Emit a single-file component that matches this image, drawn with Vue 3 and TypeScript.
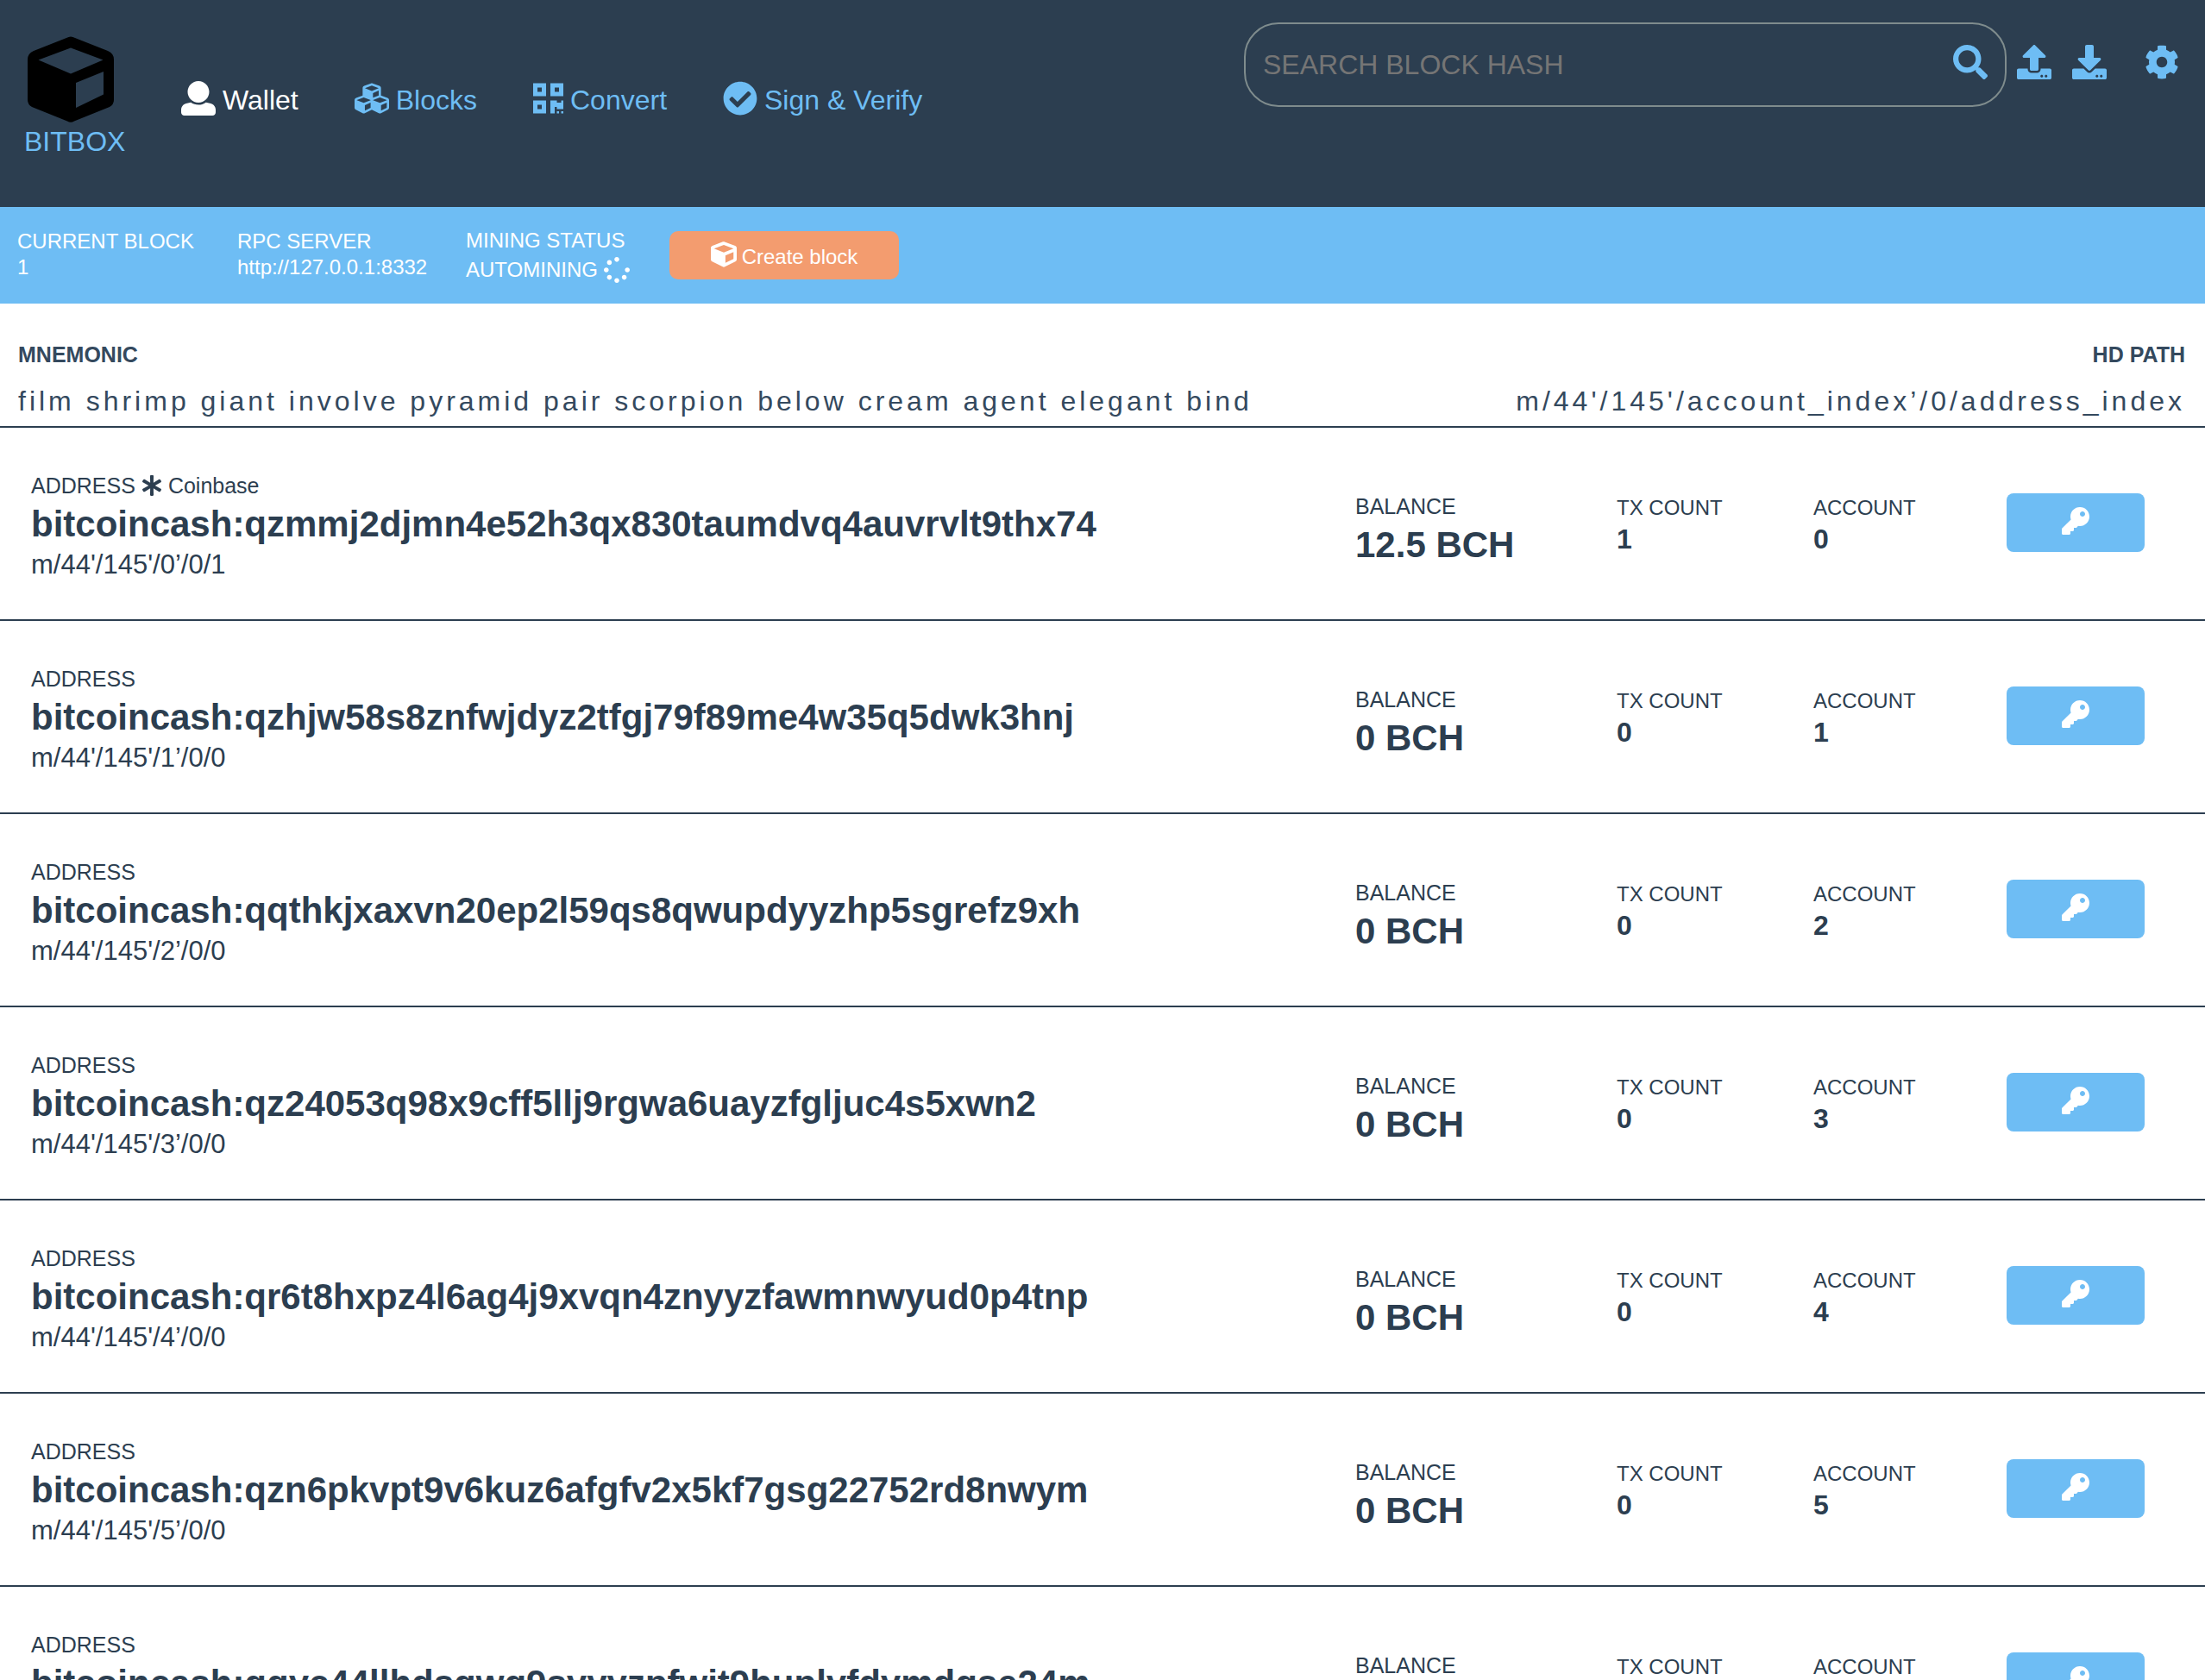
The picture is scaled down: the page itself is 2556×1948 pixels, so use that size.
<script setup lang="ts">
import { ref } from 'vue'

interface Glyph {
  box: string
  d: string
}

interface Account {
  address: string
  path: string
  balance: string
  txCount: number
  index: number
  coinbase?: boolean
}

const icons: Record<string, Glyph> = {
  user: {
    box: '0 0 512 512',
    d: 'M256 0c88.366 0 160 71.634 160 160s-71.634 160-160 160S96 248.366 96 160 167.634 0 256 0zm183.283 333.821l-71.313-17.828c-74.923 53.89-165.738 41.864-223.94 0l-71.313 17.828C29.981 344.505 0 382.903 0 426.955V464c0 26.51 21.49 48 48 48h416c26.51 0 48-21.49 48-48v-37.045c0-44.052-29.981-82.45-72.717-93.134z',
  },
  cubes: {
    box: '0 0 512 512',
    d: 'M488.6 250.2L392 214V105.5c0-15-9.3-28.4-23.4-33.7l-100-37.5c-8.1-3.1-17.1-3.1-25.3 0l-100 37.5c-14.1 5.3-23.4 18.7-23.4 33.7V214l-96.6 36.2C9.3 255.5 0 268.9 0 283.9V394c0 13.6 7.7 26.1 19.9 32.2l100 50c10.1 5.1 22.1 5.1 32.2 0l103.9-52 103.9 52c10.1 5.1 22.1 5.1 32.2 0l100-50c12.2-6.1 19.9-18.6 19.9-32.2V283.9c0-15-9.3-28.4-23.4-33.7zM358 214.8l-85 31.9v-68.2l85-37v73.3zM154 104.1l102-38.2 102 38.2v.6l-102 41.4-102-41.4v-.6zm84 291.1l-85 42.5v-79.1l85-38.8v75.4zm0-112l-102 41.4-102-41.4v-.6l102-38.2 102 38.2v.6zm240 112l-85 42.5v-79.1l85-38.8v75.4zm0-112l-102 41.4-102-41.4v-.6l102-38.2 102 38.2v.6z',
  },
  qrcode: {
    box: '0 0 448 512',
    d: 'M0 224h192V32H0v192zM64 96h64v64H64V96zm192-64v192h192V32H256zm128 128h-64V96h64v64zM0 480h192V288H0v192zm64-128h64v64H64v-64zm352-64h32v128h-96v-32h-32v96h-64V288h96v32h64v-32zm0 160h32v32h-32v-32zm-64 0h32v32h-32v-32z',
  },
  check: {
    box: '0 0 512 512',
    d: 'M504 256c0 136.967-111.033 248-248 248S8 392.967 8 256 119.033 8 256 8s248 111.033 248 248zM227.314 387.314l184-184c6.248-6.248 6.248-16.379 0-22.627l-22.627-22.627c-6.248-6.249-16.379-6.249-22.628 0L216 308.118l-70.059-70.059c-6.248-6.248-16.379-6.248-22.628 0l-22.627 22.627c-6.248 6.248-6.248 16.379 0 22.627l104 104c6.249 6.249 16.379 6.249 22.628.001z',
  },
  search: {
    box: '0 0 512 512',
    d: 'M505 442.7L405.3 343c-4.5-4.5-10.6-7-17-7H372c27.6-35.3 44-79.7 44-128C416 93.1 322.9 0 208 0S0 93.1 0 208s93.1 208 208 208c48.3 0 92.7-16.4 128-44v16.3c0 6.4 2.5 12.5 7 17l99.7 99.7c9.4 9.4 24.6 9.4 33.9 0l28.3-28.3c9.4-9.4 9.4-24.6.1-34zM208 336c-70.7 0-128-57.2-128-128 0-70.7 57.2-128 128-128 70.7 0 128 57.2 128 128 0 70.7-57.2 128-128 128z',
  },
  upload: {
    box: '0 0 512 512',
    d: 'M296 384h-80c-13.3 0-24-10.7-24-24V192h-87.7c-17.8 0-26.7-21.5-14.1-34.1L242.3 5.7c7.5-7.5 19.8-7.5 27.3 0l152.2 152.2c12.6 12.6 3.7 34.1-14.1 34.1H320v168c0 13.3-10.7 24-24 24zm216-8v112c0 13.3-10.7 24-24 24H24c-13.3 0-24-10.7-24-24V376c0-13.3 10.7-24 24-24h136v8c0 30.9 25.1 56 56 56h80c30.9 0 56-25.1 56-56v-8h136c13.3 0 24 10.7 24 24zm-124 88c0-11-9-20-20-20s-20 9-20 20 9 20 20 20 20-9 20-20zm64 0c0-11-9-20-20-20s-20 9-20 20 9 20 20 20 20-9 20-20z',
  },
  download: {
    box: '0 0 512 512',
    d: 'M216 0h80c13.3 0 24 10.7 24 24v168h87.7c17.8 0 26.7 21.5 14.1 34.1L269.7 378.3c-7.5 7.5-19.8 7.5-27.3 0L90.1 226.1c-12.6-12.6-3.7-34.1 14.1-34.1H192V24c0-13.3 10.7-24 24-24zm296 376v112c0 13.3-10.7 24-24 24H24c-13.3 0-24-10.7-24-24V376c0-13.3 10.7-24 24-24h146.7l49 49c20.1 20.1 52.5 20.1 72.6 0l49-49H488c13.3 0 24 10.7 24 24zm-124 88c0-11-9-20-20-20s-20 9-20 20 9 20 20 20 20-9 20-20zm64 0c0-11-9-20-20-20s-20 9-20 20 9 20 20 20 20-9 20-20z',
  },
  cog: {
    box: '0 0 512 512',
    d: 'M487.4 315.7l-42.6-24.6c4.3-23.2 4.3-47 0-70.2l42.6-24.6c4.9-2.8 7.1-8.6 5.5-14-11.1-35.6-30-67.8-54.7-94.6-3.8-4.1-10-5.1-14.8-2.3L380.8 110c-17.9-15.4-38.5-27.3-60.8-35.1V25.8c0-5.6-3.9-10.5-9.4-11.7-36.7-8.2-74.3-7.8-109.2 0-5.5 1.2-9.4 6.1-9.4 11.7V75c-22.2 7.9-42.8 19.8-60.8 35.1L88.7 85.5c-4.9-2.8-11-1.9-14.8 2.3-24.7 26.7-43.6 58.9-54.7 94.6-1.7 5.4.6 11.2 5.5 14L67.3 221c-4.3 23.2-4.3 47 0 70.2l-42.6 24.6c-4.9 2.8-7.1 8.6-5.5 14 11.1 35.6 30 67.8 54.7 94.6 3.8 4.1 10 5.1 14.8 2.3l42.6-24.6c17.9 15.4 38.5 27.3 60.8 35.1v49.2c0 5.6 3.9 10.5 9.4 11.7 36.7 8.2 74.3 7.8 109.2 0 5.5-1.2 9.4-6.1 9.4-11.7v-49.2c22.2-7.9 42.8-19.8 60.8-35.1l42.6 24.6c4.9 2.8 11 1.9 14.8-2.3 24.7-26.7 43.6-58.9 54.7-94.6 1.5-5.5-.7-11.3-5.6-14.1zM256 336c-44.1 0-80-35.9-80-80s35.9-80 80-80 80 35.9 80 80-35.9 80-80 80z',
  },
  spinner: {
    box: '0 0 512 512',
    d: 'M304 48c0 26.51-21.49 48-48 48s-48-21.49-48-48 21.49-48 48-48 48 21.49 48 48zm-48 368c-26.51 0-48 21.49-48 48s21.49 48 48 48 48-21.49 48-48-21.49-48-48-48zm208-208c-26.51 0-48 21.49-48 48s21.49 48 48 48 48-21.49 48-48-21.49-48-48-48zM96 256c0-26.51-21.49-48-48-48S0 229.49 0 256s21.49 48 48 48 48-21.49 48-48zm12.922 99.078c-26.51 0-48 21.49-48 48s21.49 48 48 48 48-21.49 48-48c0-26.509-21.491-48-48-48zm294.156 0c-26.51 0-48 21.49-48 48s21.49 48 48 48 48-21.49 48-48c0-26.509-21.49-48-48-48zM108.922 60.922c-26.51 0-48 21.49-48 48s21.49 48 48 48 48-21.49 48-48-21.491-48-48-48z',
  },
  cube: {
    box: '0 0 512 512',
    d: 'M239.1 6.3l-208 78c-18.7 7-31.1 25-31.1 45v225.1c0 18.2 10.3 34.8 26.5 42.9l208 104c13.5 6.8 29.4 6.8 42.9 0l208-104c16.3-8.1 26.5-24.8 26.5-42.9V129.3c0-20-12.4-37.9-31.1-44.9l-208-78C262 2.2 250 2.2 239.1 6.3zM256 68.4l192 72v1.1l-192 78-192-78v-1.1l192-72zm32 356V275.5l160-65v133.9l-160 80z',
  },
  asterisk: {
    box: '0 0 512 512',
    d: 'M478.21 334.093L336 256l142.21-78.093c11.795-6.477 15.961-21.384 9.232-33.037l-19.48-33.741c-6.728-11.653-21.72-15.499-33.227-8.523L296 186.718l3.475-162.204C299.763 11.061 288.937 0 275.48 0h-38.96c-13.456 0-24.283 11.061-23.994 24.514L216 186.718 77.265 102.607c-11.506-6.976-26.499-3.13-33.227 8.523l-19.48 33.741c-6.728 11.653-2.562 26.56 9.233 33.037L176 256 33.79 334.093c-11.795 6.477-15.961 21.384-9.232 33.037l19.48 33.741c6.728 11.653 21.721 15.499 33.227 8.523L216 325.282l-3.475 162.204C212.237 500.939 223.064 512 236.52 512h38.961c13.456 0 24.283-11.061 23.995-24.514L296 325.282l138.735 84.111c11.506 6.976 26.499 3.13 33.227-8.523l19.48-33.741c6.728-11.653 2.563-26.559-9.232-33.036z',
  },
  key: {
    box: '0 0 512 512',
    d: 'M512 176.001C512 273.203 433.202 352 336 352c-11.22 0-22.19-1.062-32.827-3.069l-24.012 27.014A23.999 23.999 0 0 1 261.223 384H224v40c0 13.255-10.745 24-24 24h-40v40c0 13.255-10.745 24-24 24H24c-13.255 0-24-10.745-24-24v-78.059c0-6.365 2.529-12.47 7.029-16.971l161.802-161.802C163.108 213.814 160 195.271 160 176 160 78.798 238.797.001 335.999 0 433.488-.001 512 78.511 512 176.001zM336 128c0 26.51 21.49 48 48 48s48-21.49 48-48-21.49-48-48-48-48 21.49-48 48z',
  },
}

const links = [
  { label: 'Wallet', icon: 'user', active: true },
  { label: 'Blocks', icon: 'cubes', active: false },
  { label: 'Convert', icon: 'qrcode', active: false },
  { label: 'Sign & Verify', icon: 'check', active: false },
]

const tools = [
  { label: 'Export', icon: 'upload' },
  { label: 'Import', icon: 'download' },
  { label: 'Settings', icon: 'cog' },
]

const accounts: Account[] = [
  { address: 'bitcoincash:qzmmj2djmn4e52h3qx830taumdvq4auvrvlt9thx74', path: "m/44'/145'/0’/0/1", balance: '12.5 BCH', txCount: 1, index: 0, coinbase: true },
  { address: 'bitcoincash:qzhjw58s8znfwjdyz2tfgj79f89me4w35q5dwk3hnj', path: "m/44'/145'/1’/0/0", balance: '0 BCH', txCount: 0, index: 1 },
  { address: 'bitcoincash:qqthkjxaxvn20ep2l59qs8qwupdyyzhp5sgrefz9xh', path: "m/44'/145'/2’/0/0", balance: '0 BCH', txCount: 0, index: 2 },
  { address: 'bitcoincash:qz24053q98x9cff5llj9rgwa6uayzfgljuc4s5xwn2', path: "m/44'/145'/3’/0/0", balance: '0 BCH', txCount: 0, index: 3 },
  { address: 'bitcoincash:qr6t8hxpz4l6ag4j9xvqn4znyyzfawmnwyud0p4tnp', path: "m/44'/145'/4’/0/0", balance: '0 BCH', txCount: 0, index: 4 },
  { address: 'bitcoincash:qzn6pkvpt9v6kuz6afgfv2x5kf7gsg22752rd8nwym', path: "m/44'/145'/5’/0/0", balance: '0 BCH', txCount: 0, index: 5 },
  { address: 'bitcoincash:qqyc44llhdsqwq9syyyzpfwjt9huplyfdymdqse24m', path: "m/44'/145'/6’/0/0", balance: '0 BCH', txCount: 0, index: 6 },
]

const mnemonic = 'film shrimp giant involve pyramid pair scorpion below cream agent elegant bind'
const hdPath = "m/44'/145'/account_index’/0/address_index"
const query = ref('')
</script>

<template>
  <div class="app">
    <header class="top">
      <a class="brand" href="#">
        <svg class="logo" viewBox="0 0 100 100" aria-hidden="true">
          <path fill-rule="evenodd" d="M45 2Q50 -1 55 2L93 17Q100 20 100 27V74Q100 79 95 82L54 98.500Q50 101 46 98.500L5 82Q0 79 0 74V27Q0 20 7 17ZM12.500 27.500L50 43.500L87.500 27.500L50 13.500ZM56 54V83L88 67.500V41Z" />
        </svg>
        <span>BITBOX</span>
      </a>
      <nav class="nav">
        <a v-for="l in links" :key="l.label" href="#" :class="{ active: l.active }">
          <svg class="i40" :viewBox="icons[l.icon].box" aria-hidden="true"><path :d="icons[l.icon].d" /></svg>
          <span>{{ l.label }}</span>
        </a>
      </nav>
      <form class="search" @submit.prevent>
        <input v-model="query" type="text" placeholder="SEARCH BLOCK HASH" aria-label="Search block hash" />
        <button type="submit" aria-label="Search">
          <svg class="i40" :viewBox="icons.search.box" aria-hidden="true"><path :d="icons.search.d" /></svg>
        </button>
      </form>
      <div class="tools">
        <a v-for="t in tools" :key="t.label" href="#" :aria-label="t.label" :class="t.icon">
          <svg class="i40" :viewBox="icons[t.icon].box" aria-hidden="true"><path :d="icons[t.icon].d" /></svg>
        </a>
      </div>
    </header>

    <section class="status">
      <div class="stat">
        <span>CURRENT BLOCK</span>
        <span>1</span>
      </div>
      <div class="stat server">
        <span>RPC SERVER</span>
        <span>http://127.0.0.1:8332</span>
      </div>
      <div class="stat mining">
        <span>MINING STATUS</span>
        <span class="auto">AUTOMINING
          <svg class="i30" :viewBox="icons.spinner.box" aria-hidden="true"><path :d="icons.spinner.d" /></svg>
        </span>
      </div>
      <button class="create" type="button">
        <svg class="i30" :viewBox="icons.cube.box" aria-hidden="true"><path :d="icons.cube.d" /></svg>
        <span>Create block</span>
      </button>
    </section>

    <section class="seed">
      <div>
        <h2>MNEMONIC</h2>
        <p>{{ mnemonic }}</p>
      </div>
      <div class="right">
        <h2>HD PATH</h2>
        <p>{{ hdPath }}</p>
      </div>
    </section>

    <table class="accounts">
      <colgroup>
        <col />
        <col class="c-balance" />
        <col class="c-count" />
        <col class="c-index" />
        <col class="c-key" />
      </colgroup>
      <tbody>
        <tr v-for="a in accounts" :key="a.index">
          <td class="address">
            <div class="label">
              <span>ADDRESS</span>
              <template v-if="a.coinbase">
                <svg class="i24" :viewBox="icons.asterisk.box" aria-hidden="true"><path :d="icons.asterisk.d" /></svg>
                <span>Coinbase</span>
              </template>
            </div>
            <div class="big">{{ a.address }}</div>
            <div class="path">{{ a.path }}</div>
          </td>
          <td class="balance">
            <div class="label">BALANCE</div>
            <div class="big">{{ a.balance }}</div>
          </td>
          <td class="number">
            <div class="label">TX COUNT</div>
            <div class="value">{{ a.txCount }}</div>
          </td>
          <td class="number">
            <div class="label">ACCOUNT</div>
            <div class="value">{{ a.index }}</div>
          </td>
          <td class="action">
            <button type="button" :aria-label="`Show key of account ${a.index}`">
              <svg class="i32" :viewBox="icons.key.box" aria-hidden="true"><path :d="icons.key.d" /></svg>
            </button>
          </td>
        </tr>
      </tbody>
    </table>
  </div>
</template>

<style>
body {
  margin: 0;
  background: #fff;
}
html {
  scrollbar-width: none;
}
</style>

<style scoped>
.app {
  font-family: "Liberation Sans", Arial, Helvetica, sans-serif;
  font-size: 32px;
  color: #2c3e50;
}
svg {
  display: block;
  flex: none;
  fill: currentColor;
}
a {
  color: inherit;
  text-decoration: none;
}
button {
  border: 0;
  color: #fff;
  font: inherit;
  cursor: pointer;
}
.i24 { height: 24px; }
.i30 { height: 30px; }
.i32 { height: 32px; }
.i40 { height: 40px; }

.top {
  display: flex;
  align-items: flex-start;
  box-sizing: border-box;
  min-height: 240px;
  padding: 26px 30px 20px 28px;
  background: #2c3e50;
  color: #6ebdf4;
}
.brand {
  display: flex;
  flex-direction: column;
  width: 118px;
  padding-top: 16px;
  line-height: 44px;
}
.logo {
  width: 100px;
  height: 100px;
  margin-left: 4px;
  fill: #000;
}
.nav {
  display: flex;
  gap: 65px;
  margin-left: 64px;
  padding-top: 68px;
}
.nav a {
  display: flex;
  gap: 8px;
  line-height: 45px;
  white-space: nowrap;
}
.nav a.active {
  color: #fff;
}
.search {
  position: relative;
  flex: 0 1 884px;
  margin-left: auto;
}
.search input {
  box-sizing: border-box;
  width: 100%;
  height: 98px;
  padding: 0 80px 0 20px;
  border: 2px solid #7f8c8d;
  border-radius: 40px;
  background: transparent;
  color: #fff;
  font: inherit;
  outline: none;
}
.search input::placeholder {
  color: #757575;
  opacity: 1;
}
.search button {
  position: absolute;
  top: 26px;
  right: 22px;
  padding: 0;
  background: none;
  color: #6ebdf4;
}
.tools {
  display: flex;
  gap: 24px;
  padding: 26px 0 0 12px;
}
.tools .cog {
  margin-left: 20px;
}

.status {
  display: flex;
  align-items: flex-start;
  box-sizing: border-box;
  min-height: 112px;
  padding: 22px 0 0 20px;
  background: #6ebdf4;
  color: #fff;
  font-size: 24px;
  line-height: 30px;
}
.stat {
  display: flex;
  flex-direction: column;
  width: 255px;
  padding-top: 3px;
}
.stat.server {
  width: 265px;
}
.stat.mining {
  width: 236px;
  padding-top: 0;
  line-height: 34px;
}
.auto {
  display: flex;
  align-items: center;
  gap: 7px;
}
.create {
  display: flex;
  justify-content: center;
  gap: 6px;
  box-sizing: border-box;
  width: 266px;
  height: 56px;
  margin-top: 6px;
  padding: 12px 0 0;
  border-radius: 10px;
  background: #f39c6f;
  line-height: 36px;
}

.seed {
  display: flex;
  justify-content: space-between;
  padding: 40px 23px 0 21px;
  border-bottom: 2px solid #2c3e50;
  color: #34495e;
}
.seed h2 {
  margin: 0;
  font-size: 25px;
  line-height: 38px;
}
.seed p {
  margin: 0;
  padding: 14px 0 8px;
  line-height: 42px;
  letter-spacing: 4px;
}
.right {
  text-align: right;
}

.accounts {
  width: 100%;
  table-layout: fixed;
  border-collapse: separate;
  border-spacing: 0;
}
.c-balance { width: 303px; }
.c-count { width: 228px; }
.c-index { width: 224px; }
.c-key { width: 266px; }
td {
  box-sizing: border-box;
  height: 224px;
  padding: 49px 0 0 36px;
  border-bottom: 2px solid #2c3e50;
  vertical-align: top;
}
.balance {
  padding-top: 73px;
}
.number {
  padding-top: 75px;
}
.action {
  padding-top: 76px;
}
.label {
  display: flex;
  align-items: center;
  gap: 7px;
  font-size: 25px;
  line-height: 36px;
}
.number .label {
  font-size: 24px;
}
.big {
  font-size: 42px;
  font-weight: bold;
  line-height: 54px;
}
.path {
  font-size: 31px;
  line-height: 40px;
}
.value {
  font-weight: bold;
  line-height: 36px;
}
.action button {
  display: flex;
  justify-content: center;
  width: 160px;
  height: 68px;
  padding: 16px 0 0;
  border-radius: 8px;
  background: #6ebdf4;
}
</style>
